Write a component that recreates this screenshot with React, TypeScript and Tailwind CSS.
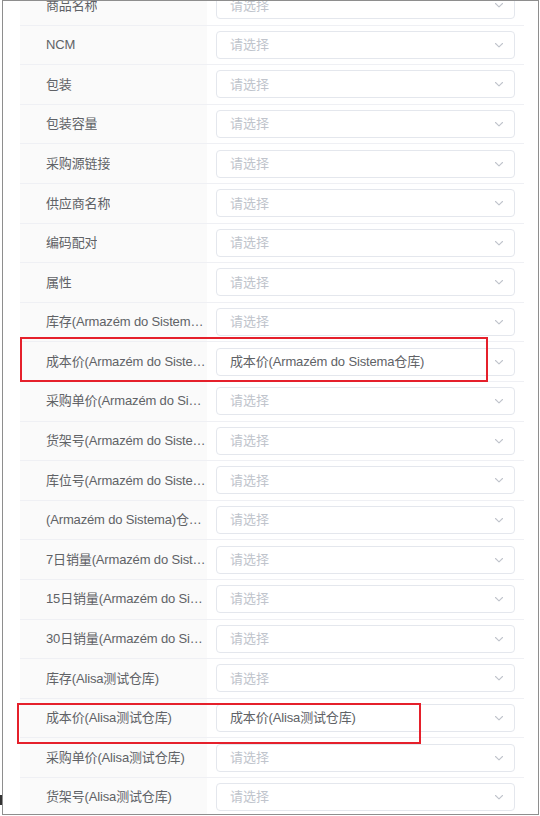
import React from 'react';

interface Field {
  label: string;
  value?: string;
}

const fields: Field[] = [
  { label: '商品名称' },
  { label: 'NCM' },
  { label: '包装' },
  { label: '包装容量' },
  { label: '采购源链接' },
  { label: '供应商名称' },
  { label: '编码配对' },
  { label: '属性' },
  { label: '库存(Armazém do Sistema仓库)' },
  { label: '成本价(Armazém do Sistema仓库)', value: '成本价(Armazém do Sistema仓库)' },
  { label: '采购单价(Armazém do Sistema仓库)' },
  { label: '货架号(Armazém do Sistema仓库)' },
  { label: '库位号(Armazém do Sistema仓库)' },
  { label: '(Armazém do Sistema)仓库可用库存' },
  { label: '7日销量(Armazém do Sistema仓库)' },
  { label: '15日销量(Armazém do Sistema仓库)' },
  { label: '30日销量(Armazém do Sistema仓库)' },
  { label: '库存(Alisa测试仓库)' },
  { label: '成本价(Alisa测试仓库)', value: '成本价(Alisa测试仓库)' },
  { label: '采购单价(Alisa测试仓库)' },
  { label: '货架号(Alisa测试仓库)' },
  { label: '库位号(Alisa测试仓库)' },
];

function Chevron() {
  return (
    <svg width="12" height="12" viewBox="0 0 12 12" fill="none" className="shrink-0">
      <path d="M2.5 4.5 L6 7.8 L9.5 4.5" stroke="#c0c4cc" strokeWidth="1.1" strokeLinecap="round" strokeLinejoin="round" />
    </svg>
  );
}

function Row({ field }: { field: Field }) {
  return (
    <div className="flex h-[39.6px] shrink-0 border-b border-[#eff0f4]">
      <div className="flex w-[187px] items-center bg-[#fafafa] pl-[26px] pr-[1px]">
        <span className="truncate text-[13px] tracking-[-0.15px] text-[#606266]">{field.label}</span>
      </div>
      <div className="flex flex-1 items-center bg-white px-[9px]">
        <div className="flex h-[28px] w-full items-center justify-between rounded-[4px] border border-[#e4e7ed] bg-white pl-[13px] pr-[9px]">
          {field.value ? (
            <span className="truncate text-[13px] tracking-[-0.15px] text-[#606266]">{field.value}</span>
          ) : (
            <span className="text-[13px] text-[#c0c4cc]">请选择</span>
          )}
          <Chevron />
        </div>
      </div>
    </div>
  );
}

export default function App() {
  return (
    <div
      className="relative h-[816px] w-[540px] overflow-hidden bg-white"
      style={{ fontFamily: '"Liberation Sans", "Noto Sans CJK SC", sans-serif' }}
    >
      <div className="ml-[2px] h-[815px] w-[537px] overflow-hidden border border-[#8e8e8e] bg-white">
        <div className="mt-[-15px] flex flex-col pl-[17px] pr-[14px]">
          {fields.map((f) => (
            <Row key={f.label} field={f} />
          ))}
        </div>
      </div>

      <div className="pointer-events-none absolute left-[20px] top-[337px] h-[45px] w-[468px] border-2 border-[#e5202b]" />
      <div className="pointer-events-none absolute left-[17px] top-[703px] h-[41px] w-[404px] border-2 border-[#e5202b]" />
      <div className="absolute left-0 top-[795px] h-[10px] w-[2px] bg-[#333]" />
    </div>
  );
}
